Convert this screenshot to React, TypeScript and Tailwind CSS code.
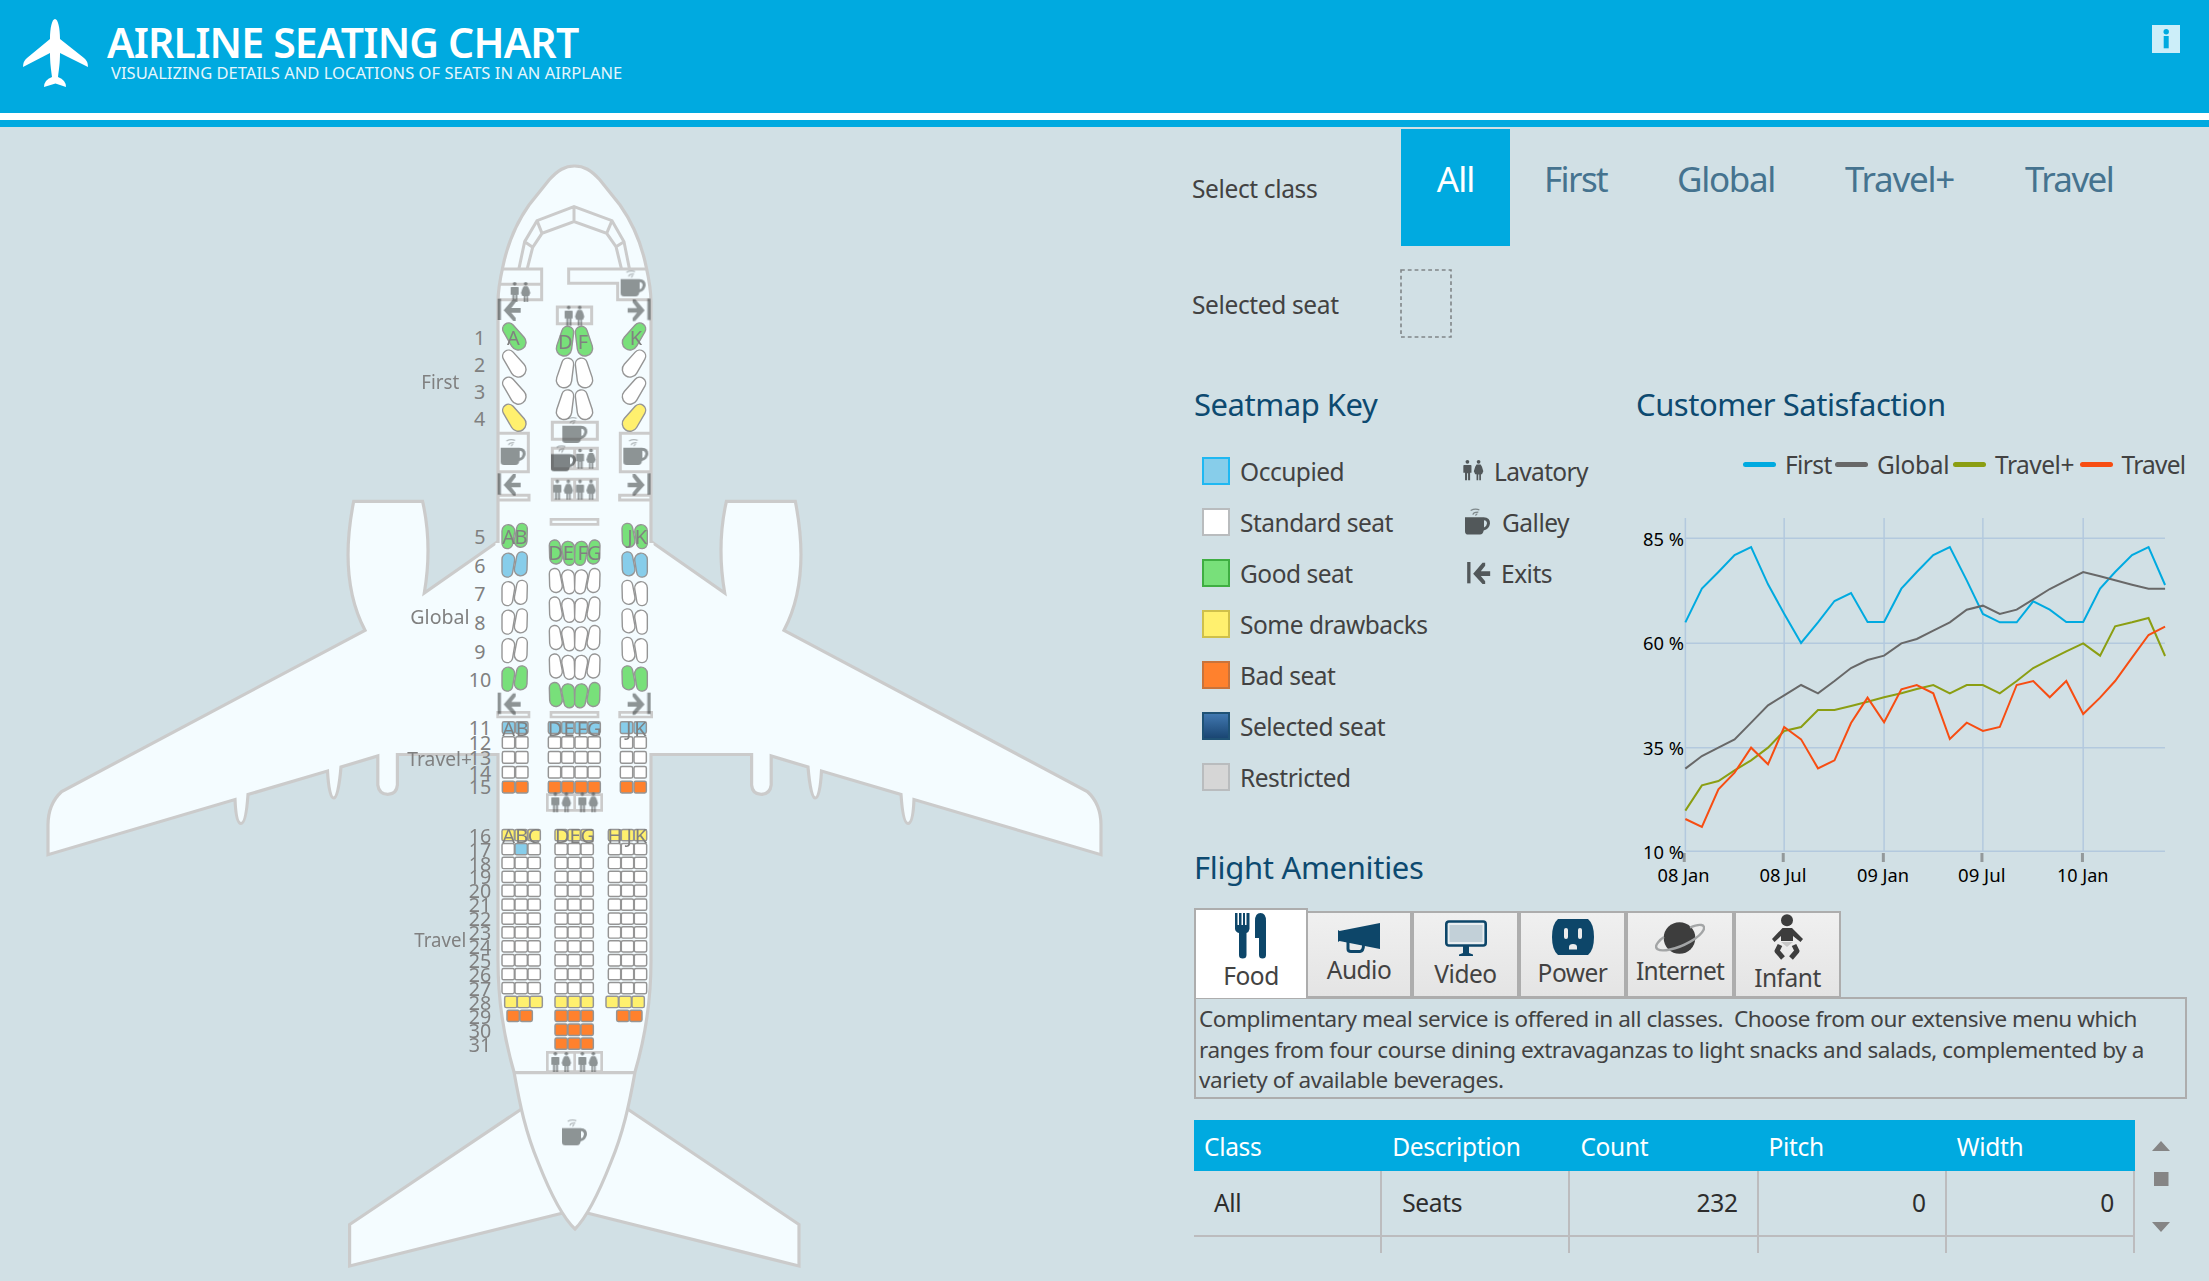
import React from "react";

const LINE = "#cbcbcb";
const HULL = "#f4fcff";
const GREEN = "#78e07a";
const BLUE = "#87cdea";
const YELLOW = "#fff06e";
const ORANGE = "#ff812d";
const WHITE = "#ffffff";

/* ---------- icons ---------- */

function Lavatory({ x, y }: { x: number; y: number }) {
  return (
    <g transform={`translate(${x} ${y})`} fill="#3c4142">
      <circle cx="13" cy="5.500" r="5.500" />
      <path d="M3 15h20q2 0 2 3v20h-4V22v38h-6V39h-3v21H6V22v16H1V18q0-3 2-3z" />
      <circle cx="46" cy="5.500" r="5.500" />
      <path d="M40 13h12l4 7 4 13-4 9h-3v18h-5V43h-3v17h-5V42h-4l-4-9 4-13z" />
    </g>
  );
}

function Cup({ x, y }: { x: number; y: number }) {
  return (
    <g transform={`translate(${x} ${y})`}>
      <path
        fill="#3c4142"
        fillRule="evenodd"
        d="M0 27H56Q76 28 75 46 73 62 56 67 54 79 45 79H10Q0 79 0 69zM57 36V58Q65 55 66 46 66 37 57 36z"
      />
      <path d="M17 7Q30 0 43 5M24 20Q24 12 40 12M32 23q0-4 5-6" fill="none" stroke="#3c4142" strokeWidth="3.500" opacity=".65" />
    </g>
  );
}

function ExitArrow({ x, y, flip = false }: { x: number; y: number; flip?: boolean }) {
  return (
    <g transform={`translate(${x} ${y}) scale(${flip ? -1 : 1} 1)`} fill="#3c4142">
      <rect x="0" y="0" width="10" height="64" />
      <path d="M18 35L46 2H54V11L41 28H69V42H41L54 58V67H47z" />
    </g>
  );
}

/* ---------- seats ---------- */

type Circle = [number, number, number];

function taper([x1, y1, r1]: Circle, [x2, y2, r2]: Circle) {
  const a = Math.atan2(y2 - y1, x2 - x1);
  const b = Math.acos((r1 - r2) / Math.hypot(x2 - x1, y2 - y1));
  const p = (x: number, y: number, r: number, t: number) => `${x + r * Math.cos(t)} ${y + r * Math.sin(t)}`;
  const big = b > Math.PI / 2 ? 1 : 0;
  return `M${p(x1, y1, r1, a + b)}L${p(x2, y2, r2, a + b)}A${r2} ${r2} 0 ${big} 0 ${p(x2, y2, r2, a - b)}L${p(x1, y1, r1, a - b)}A${r1} ${r1} 0 ${1 - big} 0 ${p(x1, y1, r1, a + b)}Z`;
}

function Pod({ a, b, dy, axis, fill }: { a: Circle; b: Circle; dy: number; axis?: number; fill: string }) {
  const m = ([x, y, r]: Circle): Circle => [axis ? axis - x : x, y + dy, r];
  return <path d={taper(m(a), m(b))} fill={fill} stroke="#959595" strokeWidth="4.200" />;
}

function Box({ x, y, w, h, fill }: { x: number; y: number; w: number; h: number; fill: string }) {
  return <rect x={x + 1} y={y + 1.5} width={w - 2} height={h - 2} rx="5" fill={fill} stroke="#959595" strokeWidth="4.400" />;
}

function Label({ x, y, size = 60, children, w, anchor = "middle" }: { x: number; y: number; size?: number; children: React.ReactNode; w?: number; anchor?: "middle" | "start" }) {
  return (
    <text x={x} y={y} fontSize={size} textAnchor={anchor} fill="#808080" textLength={w} lengthAdjust={w ? "spacingAndGlyphs" : undefined}>
      {children}
    </text>
  );
}

const fourRows = [GREEN, WHITE, WHITE, YELLOW];
const globalSide = [GREEN, BLUE, WHITE, WHITE, WHITE, GREEN];
const globalMid = [GREEN, WHITE, WHITE, WHITE, WHITE, GREEN];
const plusRows = [BLUE, WHITE, WHITE, WHITE, ORANGE];

function travelRow(i: number): { xs: number[]; fill: string }[] {
  const mid = [464, 503, 542];
  if (i < 12) {
    const fill = i === 0 ? YELLOW : WHITE;
    return [
      { xs: [305, 344, 383], fill },
      { xs: mid, fill },
      { xs: [624, 663, 702], fill },
    ];
  }
  if (i === 12) return [{ xs: [313, 351, 389, 617, 656, 695, ...mid], fill: YELLOW }];
  if (i === 13) return [{ xs: [320, 359, 649, 688, ...mid], fill: ORANGE }];
  return [{ xs: mid, fill: ORANGE }];
}

const WING =
  "M498 541.500L424.300 593Q432.500 545 422.600 501.300H353.700C345 545 345 592 365 630.300L61.700 791.500Q48 804 48 825V854.700L235 799.500Q236 823.500 241 823.500T248 794.500L327.500 771Q329 798 333.700 798T341 767L377.800 756V785Q379 794.300 387.800 794.300T397.400 785V754.500H498";

function Plane() {
  return (
    <svg className="block h-[1154px] w-[1180px] shrink-0" viewBox="0 127 1180 1154" fontFamily='"Noto Sans", sans-serif'>
      <g fill={HULL} stroke={LINE} strokeWidth="3.200">
        <path d={WING} />
        <path d={WING} transform="translate(1149 0) scale(-1 1)" />
        <path d="M523 1108L349.600 1224.500V1266L563 1213M626 1108L799 1224.500V1266L587 1213" />
        <path d="M574.500 166C584 166 591 170 600 180L620 205Q639 232 646 266Q651 288 651 302V960C651 1002 645 1038 635 1072C629 1106 623 1133 611 1162C600 1190 587 1217 575 1229C562 1217 549 1190 538 1162C526 1133 520 1106 514 1072C504 1038 498 1002 498 960V302Q498 288 503 266Q510 232 529 205L549 180C558 170 565 166 574.500 166Z" />
        <path d="M498 543V753M651 543V753" stroke={HULL} strokeWidth="5" />
        <path d="M514 1072.700H635" />
      </g>

      {/* nose, First cabin */}
      <g transform="translate(400 150) scale(.33333)">
        <g fill="none" stroke={LINE} strokeWidth="9">
          <path d="M357 355L374 275 411 212 522 170 636 212 672 275 688 355M382 355L398 292 426 250 522 215 620 250 648 290 664 355M374 275L398 292M411 212L426 250M522 170V215M636 212L620 250M672 275L648 290" />
          <path d="M305 357H425V449H294M298 403H425M742 357H506V400H653V449H752" />
          <path d="M472 471H575V521H472zM457 817H592V868H457zM457 895H592V956H457zM524 895V956M457 988H592V1050H457zM524 988V1050M293 850H385V965H293M753 850H661V965H753M293 1036H387V1050H293M753 1036H659V1050H753" />
        </g>
        {fourRows.map((c, i) => (
          <g key={i}>
            <Pod a={[326, 537, 18]} b={[355, 577, 23]} dy={i * 81.3} fill={c} />
            <Pod a={[326, 537, 18]} b={[355, 577, 23]} dy={i * 81.3} axis={1045} fill={c} />
            <Label x={239} y={584 + i * 81} size={59}>{i + 1}</Label>
          </g>
        ))}
        {fourRows.slice(0, 3).map((c, i) => (
          <g key={i}>
            <Pod a={[503, 547, 18]} b={[492, 595, 23]} dy={i * 95.3} fill={c} />
            <Pod a={[503, 547, 18]} b={[492, 595, 23]} dy={i * 95.3} axis={1047} fill={c} />
          </g>
        ))}
        <g opacity=".56">
          <Lavatory x={331} y={396} />
          <Lavatory x={493} y={467} />
          <Lavatory x={527} y={896} />
          <Lavatory x={459} y={989} />
          <Lavatory x={527} y={989} />
          <Cup x={662} y={360} />
          <Cup x={487} y={800} />
          <Cup x={302} y={866} />
          <Cup x={670} y={866} />
          <ExitArrow x={293} y={446} />
          <ExitArrow x={752} y={446} flip />
          <ExitArrow x={293} y={970} />
          <ExitArrow x={752} y={970} flip />
        </g>
        <g opacity=".64"><Cup x={453} y={885} /></g>
        <Label x={340} y={584}>A</Label>
        <Label x={496} y={597}>D</Label>
        <Label x={549} y={597}>F</Label>
        <Label x={708} y={584}>K</Label>
        <Label x={64} y={716} anchor="start" w={114}>First</Label>
      </g>

      {/* Global and Travel+ cabins */}
      <g transform="translate(400 490) scale(.33333)">
        <g fill="none" stroke={LINE} strokeWidth="8">
          <path d="M453 88H594V103H453zM293 667H387V681H293zM453 667H594V681H453zM659 667H755V681H659zM442 914H605V961H442zM524 914V961" />
        </g>
        {globalSide.map((c, i) => (
          <g key={i}>
            {[undefined, 1048].map((axis) => (
              <g key={axis ?? 0}>
                <Pod a={[325, 123, 19]} b={[322, 160, 16]} dy={i * 85.5} axis={axis} fill={c} />
                <Pod a={[366, 116, 16]} b={[362, 153, 19]} dy={i * 85.5} axis={axis} fill={c} />
                <Pod a={[464, 166, 16]} b={[468, 203, 19]} dy={i * 85.5} axis={axis} fill={globalMid[i]} />
                <Pod a={[504, 173, 19]} b={[508, 210, 16]} dy={i * 85.5} axis={axis} fill={globalMid[i]} />
              </g>
            ))}
            <Label x={240} y={162 + i * 86} size={59}>{i + 5}</Label>
          </g>
        ))}
        {plusRows.map((c, i) => (
          <g key={i}>
            {[306, 346, 444, 484, 524, 563, 660, 701].map((x) => (
              <Box key={x} x={x} y={694 + i * 44.6} w={39} h={37} fill={c} />
            ))}
            <Label x={240} y={735 + i * 44.6} size={59}>{i + 11}</Label>
          </g>
        ))}
        <g opacity=".56">
          <ExitArrow x={293} y={608} />
          <ExitArrow x={752} y={608} flip />
          <Lavatory x={453} y={907} />
          <Lavatory x={534} y={907} />
        </g>
        {[["A", 326, 161], ["B", 363, 161], ["J", 690, 161], ["K", 723, 161], ["D", 467, 209], ["E", 505, 209], ["F", 548, 209], ["G", 583, 209],
          ["A", 326, 737], ["B", 367, 737], ["D", 465, 737], ["E", 507, 737], ["F", 546, 737], ["G", 583, 737], ["J", 686, 737], ["K", 721, 737]].map(([t, x, y]) => (
          <Label key={`${t}${y}`} x={x as number} y={y as number}>{t}</Label>
        ))}
        <Label x={31} y={402} anchor="start" w={178}>Global</Label>
        <Label x={22} y={828} anchor="start" w={194}>Travel+</Label>
      </g>

      {/* Travel cabin and tail */}
      <g transform="translate(400 800) scale(.33333)">
        <path d="M442 757H605V815H442zM524 757V815" fill="none" stroke={LINE} strokeWidth="8" />
        {Array.from({ length: 16 }, (_, i) => (
          <g key={i}>
            {travelRow(i).map((g, k) =>
              g.xs.map((x) => (
                <Box key={`${k}-${x}`} x={x} y={87 + i * 41.7} w={39} h={36} fill={i === 1 && x === 344 ? BLUE : g.fill} />
              )),
            )}
            <Label x={240} y={128 + i * 41.8} size={59}>{i + 16}</Label>
          </g>
        ))}
        <g opacity=".56">
          <Lavatory x={453} y={756} />
          <Lavatory x={534} y={756} />
          <Cup x={486} y={957} />
        </g>
        {[["A", 326], ["B", 365], ["C", 402], ["D", 487], ["E", 525], ["G", 563], ["H", 645], ["J", 688], ["K", 723]].map(([t, x]) => (
          <Label key={t} x={x as number} y={128}>{t}</Label>
        ))}
        <Label x={43} y={440} anchor="start" w={156}>Travel</Label>
      </g>
    </svg>
  );
}

/* ---------- class selector and key ---------- */

function ClassTabs() {
  return (
    <div className="flex h-[117px] text-[35px] leading-[100px] text-[#45738f]">
      <div className="w-[109px] bg-[#00aae0] text-center tracking-[-0.03em] text-white">All</div>
      <div className="w-[133px] pl-[34px] tracking-[-0.045em]">First</div>
      <div className="w-[168px] pl-[34px] tracking-[-0.037em]">Global</div>
      <div className="w-[180px] pl-[34px] tracking-[-0.035em]">Travel+</div>
      <div className="w-[140px] pl-[34px] tracking-[-0.045em]">Travel</div>
    </div>
  );
}

const swatches = [
  { name: "Occupied", look: "border-[#1fb8f2] bg-[#87cdea]" },
  { name: "Standard seat", look: "border-[#b9bcbe] bg-white" },
  { name: "Good seat", look: "border-[#3fae42] bg-[#78e07a]" },
  { name: "Some drawbacks", look: "border-[#cfc04a] bg-[#fff06e]" },
  { name: "Bad seat", look: "border-[#c9733a] bg-[#ff812d]" },
  { name: "Selected seat", look: "border-[#1f5275] bg-linear-to-b from-[#4178b0] to-[#1a4673]" },
  { name: "Restricted", look: "border-[#b9bcbe] bg-[#d6d6d6]" },
];

function SeatmapKey() {
  return (
    <div className="flex h-[357px] pt-[1px] text-[24.5px] leading-[51px] tracking-[-0.02em] text-[#424242]">
      <div className="w-[255px] pl-[8px]">
        {swatches.map((s) => (
          <div key={s.name} className="flex h-[51px] items-center">
            <div className={`mr-[10px] h-[28px] w-[28px] border-2 ${s.look}`} />
            <span className="pt-[2px] whitespace-nowrap">{s.name}</span>
          </div>
        ))}
      </div>
      <div className="pl-[14px]">
        <div className="flex h-[51px] items-center">
          <svg className="mr-[10px] h-[21px] w-[21px]" viewBox="0 0 62 62" opacity=".85"><Lavatory x={0} y={0} /></svg>
          <span className="pt-[2px] tracking-[-0.027em]">Lavatory</span>
        </div>
        <div className="flex h-[51px] items-center">
          <svg className="mr-[11px] ml-[2px] h-[27px] w-[26px]" viewBox="0 0 78 80" opacity=".85"><Cup x={0} y={0} /></svg>
          <span className="pt-[2px]">Galley</span>
        </div>
        <div className="flex h-[51px] items-center">
          <svg className="mr-[10px] ml-[4px] h-[22px] w-[24px]" viewBox="0 0 71 66" opacity=".85"><ExitArrow x={0} y={0} /></svg>
          <span className="pt-[2px]">Exits</span>
        </div>
      </div>
    </div>
  );
}

/* ---------- satisfaction chart ---------- */

const xs = [174, 218, 262, 305, 349, 394, 437, 482, 527, 571, 615, 659, 703, 749, 790, 834, 878, 923, 966, 1011, 1056, 1100, 1144, 1188, 1233, 1278, 1318, 1363, 1407, 1451];
const series = [
  { name: "First", color: "#00aae0", ys: [727, 626, 576, 525, 501, 613, 701, 789, 727, 663, 639, 726, 726, 626, 576, 525, 501, 601, 702, 727, 727, 664, 689, 726, 726, 626, 576, 525, 501, 615] },
  { name: "Global", color: "#686868", ys: [1166, 1128, 1103, 1078, 1028, 976, 946, 915, 940, 903, 864, 840, 827, 790, 777, 752, 727, 689, 677, 702, 689, 658, 627, 602, 576, 589, 601, 614, 626, 626] },
  { name: "Travel+", color: "#8b9e12", ys: [1292, 1216, 1203, 1171, 1141, 1103, 1053, 1041, 990, 990, 978, 965, 952, 940, 927, 915, 940, 915, 915, 940, 903, 864, 839, 814, 790, 827, 739, 727, 714, 828] },
  { name: "Travel", color: "#f74d12", ys: [1317, 1341, 1228, 1178, 1103, 1153, 1041, 1078, 1165, 1141, 1029, 953, 1027, 928, 915, 940, 1077, 1028, 1053, 1041, 915, 903, 952, 903, 1002, 953, 903, 833, 765, 740] },
];
const sx = (v: number) => 1620 + v / 2.662;
const sy = (v: number) => 380 + v / 3;

function Chart() {
  return (
    <svg className="block h-[390px] w-[552px]" viewBox="1637 500 552 390" fontFamily='"Noto Sans", sans-serif' fontSize="17.500">
      <g stroke="#b3c9de" strokeWidth="1.500">
        {[475, 790, 1103, 1414].map((y) => <path key={y} d={`M1685 ${sy(y)}H2165`} />)}
        {[174, 437, 703, 966, 1233].map((x) => <path key={x} d={`M${sx(x)} 518V851`} />)}
      </g>
      <g fill="#93999b">
        {[171, 434.5, 701, 963.5, 1231].map((x) => <rect key={x} x={sx(x) - 1.5} y="853" width="3" height="9" />)}
      </g>
      <g fill="none" strokeWidth="2">
        {series.map((s) => (
          <polyline key={s.name} stroke={s.color} points={s.ys.map((y, i) => `${sx(xs[i])},${sy(y)}`).join(" ")} />
        ))}
      </g>
      <g fill="#000">
        {[["85 %", 546], ["60 %", 650], ["35 %", 755], ["10 %", 859]].map(([t, y]) => (
          <text key={t} x="1643" y={y} textLength="41" lengthAdjust="spacingAndGlyphs">{t}</text>
        ))}
        {([["08 Jan", 1657.5, 52], ["08 Jul", 1759.5, 47], ["09 Jan", 1857, 52], ["09 Jul", 1958, 47.5], ["10 Jan", 2057, 51.5]] as [string, number, number][]).map(([t, x, w]) => (
          <text key={t} x={x} y="882" textLength={w} lengthAdjust="spacingAndGlyphs">{t}</text>
        ))}
      </g>
    </svg>
  );
}

function Legend() {
  const looks = [
    { name: "First", bar: "bg-[#00aae0]", box: "w-[92px] tracking-[-0.025em]" },
    { name: "Global", bar: "bg-[#686868]", box: "w-[118px] tracking-[-0.012em]" },
    { name: "Travel+", bar: "bg-[#8b9e12]", box: "w-[126.5px] tracking-[-0.02em]" },
    { name: "Travel", bar: "bg-[#f74d12]", box: "w-[110px] tracking-[-0.03em]" },
  ];
  return (
    <div className="flex h-[40px] items-center pl-[106px] text-[24.5px] text-[#424242]">
      {looks.map((l) => (
        <div key={l.name} className={`flex items-center ${l.box}`}>
          <div className={`mr-[9px] h-[5px] w-[33px] shrink-0 rounded-sm ${l.bar}`} />
          <span className="pt-[2px]">{l.name}</span>
        </div>
      ))}
    </div>
  );
}

/* ---------- amenities ---------- */

const NAVY = "#0d4669";
const DARK = "#3d3d3d";

function FoodIcon() {
  return (
    <svg className="h-[46px] w-[32px]" viewBox="0 0 32 46" fill={NAVY}>
      <path d="M0 0H2.500V12H4V0H6.500V12H8V0H10V12H11.500V0H14.500V16Q14 19 11.500 20V42Q11.500 45.500 7.700 45.500T4 42V20Q.5 19 0 16z" />
      <path d="M20 25V8Q20 0 25.500 0T31 8V42Q31 45.500 27.500 45.500T24 42V25z" />
    </svg>
  );
}
function AudioIcon() {
  return (
    <svg className="h-[30px] w-[42px]" viewBox="0 0 42 30">
      <path d="M0 7L1.500 8 42 0V26L1.500 18 0 19z" fill={NAVY} />
      <path d="M10 19V26Q10 28.500 13 28.500H22Q25.500 28 25.500 22" fill="none" stroke={NAVY} strokeWidth="3" />
    </svg>
  );
}
function VideoIcon() {
  return (
    <svg className="h-[36px] w-[42px]" viewBox="0 0 42 36">
      <rect x="1.300" y="1.500" width="39.400" height="24" rx="2.500" fill="#e9eef1" stroke={NAVY} strokeWidth="2.600" />
      <rect x="4.500" y="5" width="33" height="17" fill="#c2d0d8" />
      <path d="M18 26H24V33L28 34.500V36H14V34.500L18 33z" fill={NAVY} />
    </svg>
  );
}
function PowerIcon() {
  return (
    <svg className="h-[36px] w-[42px]" viewBox="0 0 42 36">
      <path d="M6 0H36Q42 5 42 18T36 36H6Q0 31 0 18T6 0z" fill={NAVY} />
      <rect x="12" y="9" width="4" height="11" rx="2" fill="#ececec" />
      <rect x="26" y="9" width="4" height="11" rx="2" fill="#ececec" />
      <path d="M17 30.500V28Q17 25 21 25T25 28V30.500z" fill="#ececec" />
    </svg>
  );
}
function InternetIcon() {
  return (
    <svg className="h-[34px] w-[50px]" viewBox="0 0 50 34">
      <circle cx="24.500" cy="17" r="15.800" fill={DARK} />
      <path d="M35 6.500C45 2 51 3.500 48.500 9C45 16.500 28 26 15 28.500C3 31 -2 27.500 3 21.500Q5 18.500 9 16" fill="none" stroke="#a3a5a6" strokeWidth="2.400" />
    </svg>
  );
}
function InfantIcon() {
  return (
    <svg className="h-[46px] w-[32px]" viewBox="0 0 32 46">
      <circle cx="15" cy="6.200" r="6" fill={DARK} />
      <path d="M10.500 14H20L31 25 28.500 28 21 22V27H9V22L2.500 28 0 25z" fill={DARK} />
      <path d="M9 28H21L15 33z" fill="#c6c6c6" />
      <path d="M8 31L5 37 11 44M22 31L25 37 19 44" fill="none" stroke={DARK} strokeWidth="5" strokeLinejoin="round" />
    </svg>
  );
}

const tab = "box-border flex h-[87px] flex-col items-center border-2 border-[#adadad] bg-linear-to-b from-[#f0f0f0] to-[#e4e4e4]";

function Amenities() {
  return (
    <div className="text-[24.5px] tracking-[-0.02em] text-[#424242]">
      <div className="relative z-10 flex h-[90px] items-end">
        <div className="flex h-[90px] w-[114px] flex-col items-center border-2 border-b-0 border-[#adadad] bg-white pt-[3px]">
          <FoodIcon />
          <span className="mt-[4px] leading-[26px]">Food</span>
        </div>
        <div className={`${tab} -ml-[2px] w-[106px] pt-[10px]`}>
          <AudioIcon />
          <span className="mt-[4px] leading-[26px]">Audio</span>
        </div>
        <div className={`${tab} w-[107px] pt-[7px]`}>
          <VideoIcon />
          <span className="mt-[5px] leading-[26px]">Video</span>
        </div>
        <div className={`${tab} w-[107px] pt-[6px]`}>
          <PowerIcon />
          <span className="mt-[5px] leading-[26px]">Power</span>
        </div>
        <div className={`${tab} w-[108px] pt-[8px]`}>
          <InternetIcon />
          <span className="mt-[3px] leading-[26px] tracking-[-0.03em]">Internet</span>
        </div>
        <div className={`${tab} w-[107px] pt-[1px]`}>
          <InfantIcon />
          <span className="mt-[5px] leading-[26px]">Infant</span>
        </div>
      </div>
      <div className="-mt-[1px] h-[102px] w-[993px] border-2 border-[#adadad] pt-[5px] pl-[3px] text-[22.5px] leading-[30.5px] tracking-[-0.02em] whitespace-pre">
        <p>{"Complimentary meal service is offered in all classes.  Choose from our extensive menu which"}</p>
        <p>ranges from four course dining extravaganzas to light snacks and salads, complemented by a</p>
        <p>variety of available beverages.</p>
      </div>
    </div>
  );
}

/* ---------- class table ---------- */

function ClassTable() {
  const head = ["Class", "Description", "Count", "Pitch", "Width"];
  const row = ["All", "Seats", "232", "0", "0"];
  return (
    <div className="mt-[21px] flex tracking-[-0.02em]">
      <div className="w-[941px] text-[24.5px]">
        <div className="grid h-[51px] grid-cols-5 bg-[#00aae0] leading-[54px] text-white">
          {head.map((h) => <div key={h} className="pl-[10px]">{h}</div>)}
        </div>
        <div className="grid h-[66px] grid-cols-5 border-b-2 border-[#bcbcbe] leading-[64px] text-[#2d2d2d]">
          {row.map((c, i) => (
            <div key={i} className={`border-r-2 border-[#bcbcbe] ${i > 1 ? "pr-[19px] text-right" : "pl-[20px]"}`}>{c}</div>
          ))}
        </div>
        <div className="grid h-[16px] grid-cols-5">
          {row.map((_, i) => <div key={i} className="border-r-2 border-[#bcbcbe]" />)}
        </div>
      </div>
      <svg className="ml-[17px] h-[133px] w-[18px]" viewBox="0 0 18 133" fill="#858585">
        <path d="M9 21L18 31H0zM2 52H16.500V66H2zM0 102H18L9 112z" />
      </svg>
    </div>
  );
}

export default function App() {
  return (
    <div className="h-[1281px] w-[2209px] overflow-hidden bg-[#d1e0e5] font-['Noto_Sans',sans-serif]">
      <header className="h-[127px] border-b-[7px] border-[#00aae0] bg-white">
        <div className="flex h-[113px] items-start bg-[#00aae0] pl-[23px] text-white">
          <svg className="mt-[19px] h-[68px] w-[65px]" viewBox="0 0 65 68" fill="#fff">
            <path d="M32 0C35 0 37 9 37 20L61 39Q65 42 65 48L37 34C37 44 36 50 35 58Q43 61 43 68L32.500 64.500 21 68Q21 61 29 58C28 50 27 44 27 34L0 48Q0 42 4 39L27 20C27 9 29 0 32 0z" />
          </svg>
          <div className="mt-[20px] ml-[19px] grow">
            <h1 className="text-[41px] leading-[44px] font-semibold tracking-[-0.02em]">AIRLINE SEATING CHART</h1>
            <p className="mt-[1px] ml-[4px] text-[16.5px] leading-[16px] tracking-[0.002em] text-[#e6f6fc]">VISUALIZING DETAILS AND LOCATIONS OF SEATS IN AN AIRPLANE</p>
          </div>
          <svg className="mt-[25px] mr-[29px] h-[28px] w-[28px]" viewBox="0 0 28 28">
            <rect width="28" height="28" fill="#cceef9" />
            <circle cx="14.200" cy="6.800" r="2.700" fill="#00aae0" />
            <rect x="11.700" y="11" width="5" height="12.300" fill="#00aae0" />
          </svg>
        </div>
      </header>
      <main className="flex h-[1154px]">
        <Plane />
        <section className="w-[1029px] pt-[2px] pl-[12px]">
          <div className="flex h-[140px]">
            <div className="w-[209px] text-[24.5px] leading-[120px] tracking-[-0.015em] text-[#424242]">Select class</div>
            <ClassTabs />
          </div>
          <div className="flex h-[113px]">
            <div className="w-[208px] text-[24.5px] leading-[72px] tracking-[-0.015em] text-[#424242]">Selected seat</div>
            <svg className="h-[69px] w-[52px]" viewBox="0 0 52 69">
              <rect x="1" y="1" width="50" height="67" fill="none" stroke="#808588" strokeWidth="1.600" strokeDasharray="3.800 3" />
            </svg>
          </div>
          <div className="ml-[2px] flex h-[526px]">
            <div className="w-[443px]">
              <h2 className="h-[62px] text-[31px] leading-[45px] tracking-[-0.015em] text-[#0d4a70]">Seatmap Key</h2>
              <SeatmapKey />
              <h2 className="pt-[44px] text-[31px] leading-[45px] tracking-[-0.01em] text-[#0d4a70]">Flight Amenities</h2>
            </div>
            <div>
              <h2 className="-ml-[1px] h-[62px] text-[31px] leading-[45px] tracking-[-0.015em] text-[#0d4a70]">Customer Satisfaction</h2>
              <Legend />
              <div className="pt-[16px]"><Chart /></div>
            </div>
          </div>
          <div className="ml-[2px]">
            <Amenities />
            <ClassTable />
          </div>
        </section>
      </main>
    </div>
  );
}
